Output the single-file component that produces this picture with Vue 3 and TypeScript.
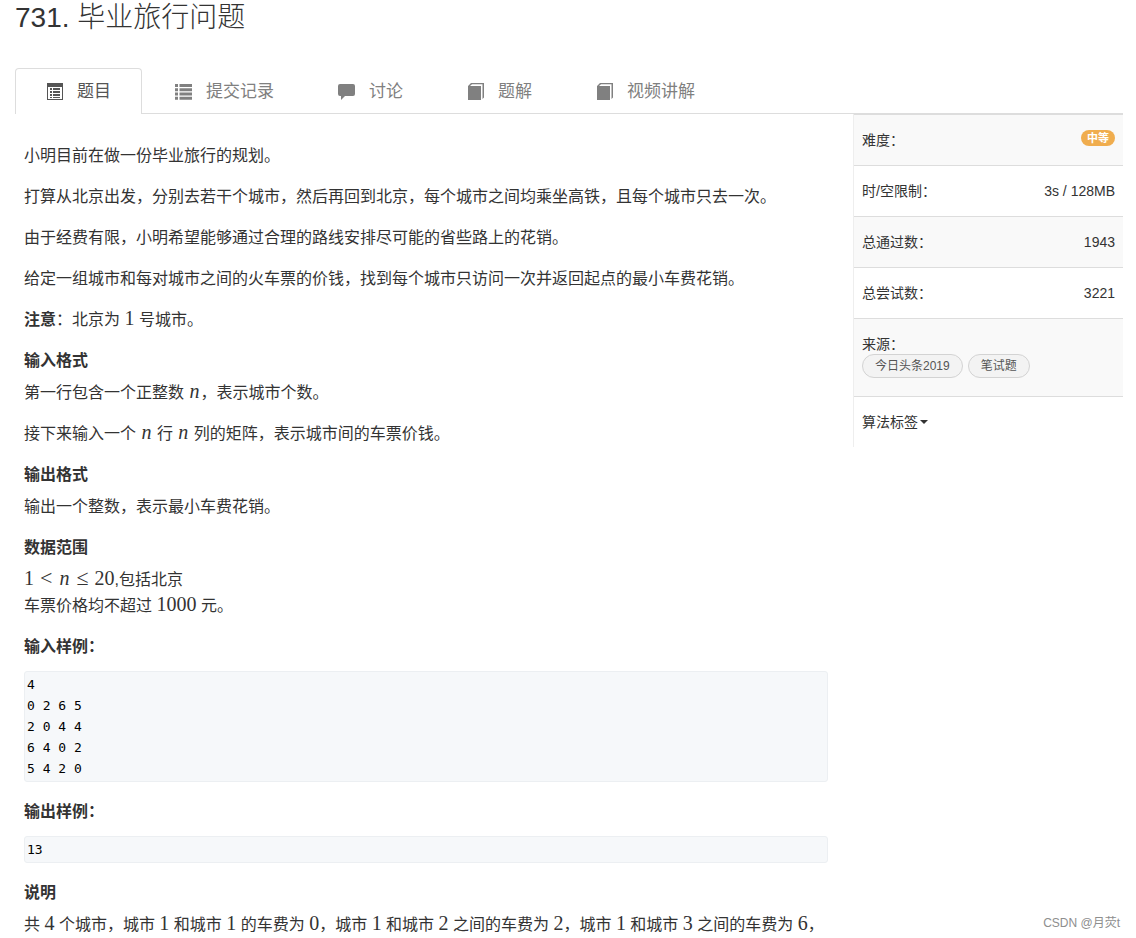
<script setup lang="ts">
import { ref } from 'vue'

type IconName = 'sheet' | 'list' | 'comment' | 'book'
interface Tab { label: string; icon: IconName }

const tabs: Tab[] = [
  { label: '题目', icon: 'sheet' },
  { label: '提交记录', icon: 'list' },
  { label: '讨论', icon: 'comment' },
  { label: '题解', icon: 'book' },
  { label: '视频讲解', icon: 'book' },
]
const active = ref(0)

const limits = [
  { label: '时/空限制：', value: '3s / 128MB' },
  { label: '总通过数：', value: '1943' },
  { label: '总尝试数：', value: '3221' },
]
const sources = ['今日头条2019', '笔试题']

const sampleInput = ['4', '0 2 6 5', '2 0 4 4', '6 4 0 2', '5 4 2 0'].join('\n')
const sampleOutput = '13'
</script>

<template>
  <div class="page">
    <h1 class="title">731. 毕业旅行问题</h1>

    <nav class="tabs">
      <a
        v-for="(tab, i) in tabs"
        :key="tab.label"
        href="#"
        class="tab"
        :class="{ active: i === active }"
        @click.prevent="active = i"
      >
        <svg class="icon" viewBox="0 0 17 17" aria-hidden="true">
          <template v-if="tab.icon === 'sheet'">
            <path fill-rule="evenodd" d="M1 0H17V17H1ZM2 4V16H16V4Z" />
            <path d="M4 5h2v2H4zM7 5h7v2H7zM4 8h2v2H4zM7 8h7v2H7zM4 11h2v2H4zM7 11h7v2H7zM4 14h2v1H4zM7 14h7v1H7z" />
          </template>
          <template v-else-if="tab.icon === 'list'">
            <path d="M0 1h3v3H0zM4.500 1h12.500v3H4.500zM0 5.200h3v3H0zM4.500 5.200h12.500v3H4.500zM0 9.500h3v3H0zM4.500 9.500h12.500v3H4.500zM0 13.800h3v3H0zM4.500 13.800h12.500v3H4.500z" />
          </template>
          <path
            v-else-if="tab.icon === 'comment'"
            d="M2 1H15Q17 1 17 3V11Q17 13 15 13H7L3 17V13H2Q0 13 0 11V3Q0 1 2 1Z"
          />
          <path
            v-else
            d="M4 0H17V14.500L15.500 16V1.300H5L3 3H14V17H1V3Z"
          />
        </svg>
        <span>{{ tab.label }}</span>
      </a>
    </nav>

    <div class="columns">
      <main class="problem">
        <p>小明目前在做一份毕业旅行的规划。</p>
        <p>打算从北京出发，分别去若干个城市，然后再回到北京，每个城市之间均乘坐高铁，且每个城市只去一次。</p>
        <p>由于经费有限，小明希望能够通过合理的路线安排尽可能的省些路上的花销。</p>
        <p>给定一组城市和每对城市之间的火车票的价钱，找到每个城市只访问一次并返回起点的最小车费花销。</p>
        <p><strong>注意</strong>：北京为 <span class="math">1</span> 号城市。</p>

        <h2>输入格式</h2>
        <p>第一行包含一个正整数 <i class="math">n</i>，表示城市个数。</p>
        <p>接下来输入一个 <i class="math">n</i> 行 <i class="math">n</i> 列的矩阵，表示城市间的车票价钱。</p>

        <h2>输出格式</h2>
        <p>输出一个整数，表示最小车费花销。</p>

        <h2>数据范围</h2>
        <p>
          <span class="math">1<span class="rel">&lt;</span><i>n</i><span class="rel">≤</span>20</span>,包括北京<br>
          车票价格均不超过 <span class="math">1000</span> 元。
        </p>

        <h2 class="sample">输入样例：</h2>
        <pre>{{ sampleInput }}</pre>
        <h2 class="sample">输出样例：</h2>
        <pre>{{ sampleOutput }}</pre>

        <h2>说明</h2>
        <p>
          共 <span class="math">4</span> 个城市，城市 <span class="math">1</span> 和城市 <span class="math">1</span> 的车费为 <span class="math">0</span>，城市 <span class="math">1</span> 和城市 <span class="math">2</span> 之间的车费为 <span class="math">2</span>，城市 <span class="math">1</span> 和城市 <span class="math">3</span> 之间的车费为 <span class="math">6</span>，
        </p>
      </main>

      <aside>
        <table class="info">
          <tbody>
            <tr>
              <th scope="row">难度：</th>
              <td><span class="badge">中等</span></td>
            </tr>
            <tr v-for="row in limits" :key="row.label">
              <th scope="row">{{ row.label }}</th>
              <td>{{ row.value }}</td>
            </tr>
            <tr>
              <th scope="row" colspan="2">
                来源：
                <div class="pills">
                  <a v-for="s in sources" :key="s" href="#" class="pill" @click.prevent>{{ s }}</a>
                </div>
              </th>
            </tr>
            <tr>
              <th scope="row" colspan="2">
                <button type="button" class="dropdown">算法标签<span class="caret"></span></button>
              </th>
            </tr>
          </tbody>
        </table>
      </aside>
    </div>

    <div class="watermark">CSDN @月荧t</div>
  </div>
</template>

<style>
body {
  margin: 0;
  background: #fff;
}
</style>

<style scoped>
.page {
  position: relative;
  box-sizing: border-box;
  min-height: 100vh;
  padding: 0 13px 0 15px;
  color: #333;
  font: 14px/20px "Liberation Sans", "Noto Sans CJK SC", sans-serif;
}
.title {
  margin: 0;
  font-size: 28px;
  line-height: 36px;
  font-weight: 300;
}
.tabs {
  display: flex;
  gap: 2px;
  margin-top: 32px;
  border-bottom: 1px solid #ddd;
}
.tab {
  display: flex;
  align-items: center;
  gap: 14px;
  padding: 0 30px;
  margin-bottom: -1px;
  border: 1px solid transparent;
  border-bottom: 0;
  border-radius: 4px 4px 0 0;
  color: #808080;
  font-size: 17px;
  line-height: 45px;
  text-decoration: none;
}
.tab.active {
  border-color: #ddd;
  background: #fff;
  color: #555;
}
.icon {
  width: 17px;
  height: 17px;
  fill: currentColor;
}
.columns {
  display: grid;
  grid-template-columns: minmax(0, 1fr) 270px;
  align-items: start;
}
.problem {
  padding: 29px 20px 0 9px;
  font-size: 16px;
  line-height: 26px;
}
.problem p {
  margin: 0 0 15px;
}
.problem p:last-child {
  margin-bottom: 0;
}
.problem h2 {
  margin: 0 0 6px;
  font-size: 16px;
  line-height: 26px;
  font-weight: 700;
}
.problem h2.sample {
  margin-bottom: 11px;
}
.math {
  font-family: "Liberation Serif", serif;
  font-size: 20px;
  line-height: 20px;
}
i {
  padding: 0 1px;
}
.rel {
  padding: 0 6px;
  font-size: 22px;
}
pre {
  margin: 0 5px 17px 0;
  padding: 2px;
  border: 1px solid #eceff2;
  border-radius: 3px;
  background: #f6f8fa;
  color: #000;
  font: 13px/21px "DejaVu Sans Mono", monospace;
}
.info {
  width: 100%;
  border-collapse: separate;
  border-spacing: 0;
  border-left: 1px solid #eee;
}
.info th,
.info td {
  padding: 15px 8px;
  border-top: 1px solid #ddd;
  font-weight: 400;
  text-align: left;
  vertical-align: top;
}
.info td {
  text-align: right;
}
.info tr:nth-child(odd) > * {
  background: #f9f9f9;
}
.badge {
  display: block;
  width: fit-content;
  margin-left: auto;
  padding: 0 6px;
  border-radius: 8px;
  background: #f0ad4e;
  color: #fff;
  font-size: 11px;
  line-height: 16px;
  font-weight: 700;
}
.pills {
  display: flex;
  flex-wrap: wrap;
  gap: 5px;
  margin-bottom: 3px;
}
.pill {
  padding: 0 12px;
  border: 1px solid #d3d3d3;
  border-radius: 12px;
  background: #f3f3f3;
  color: #555;
  font-size: 12px;
  line-height: 22px;
  text-decoration: none;
}
.dropdown {
  display: flex;
  align-items: center;
  gap: 2px;
  padding: 0;
  border: 0;
  background: none;
  color: inherit;
  font: inherit;
  cursor: pointer;
}
.caret {
  border: 4px solid transparent;
  border-top-color: #333;
  border-bottom: 0;
}
.watermark {
  position: absolute;
  right: 16px;
  bottom: 6px;
  color: #8e8e8e;
  font-size: 12px;
  line-height: 18px;
}
</style>
